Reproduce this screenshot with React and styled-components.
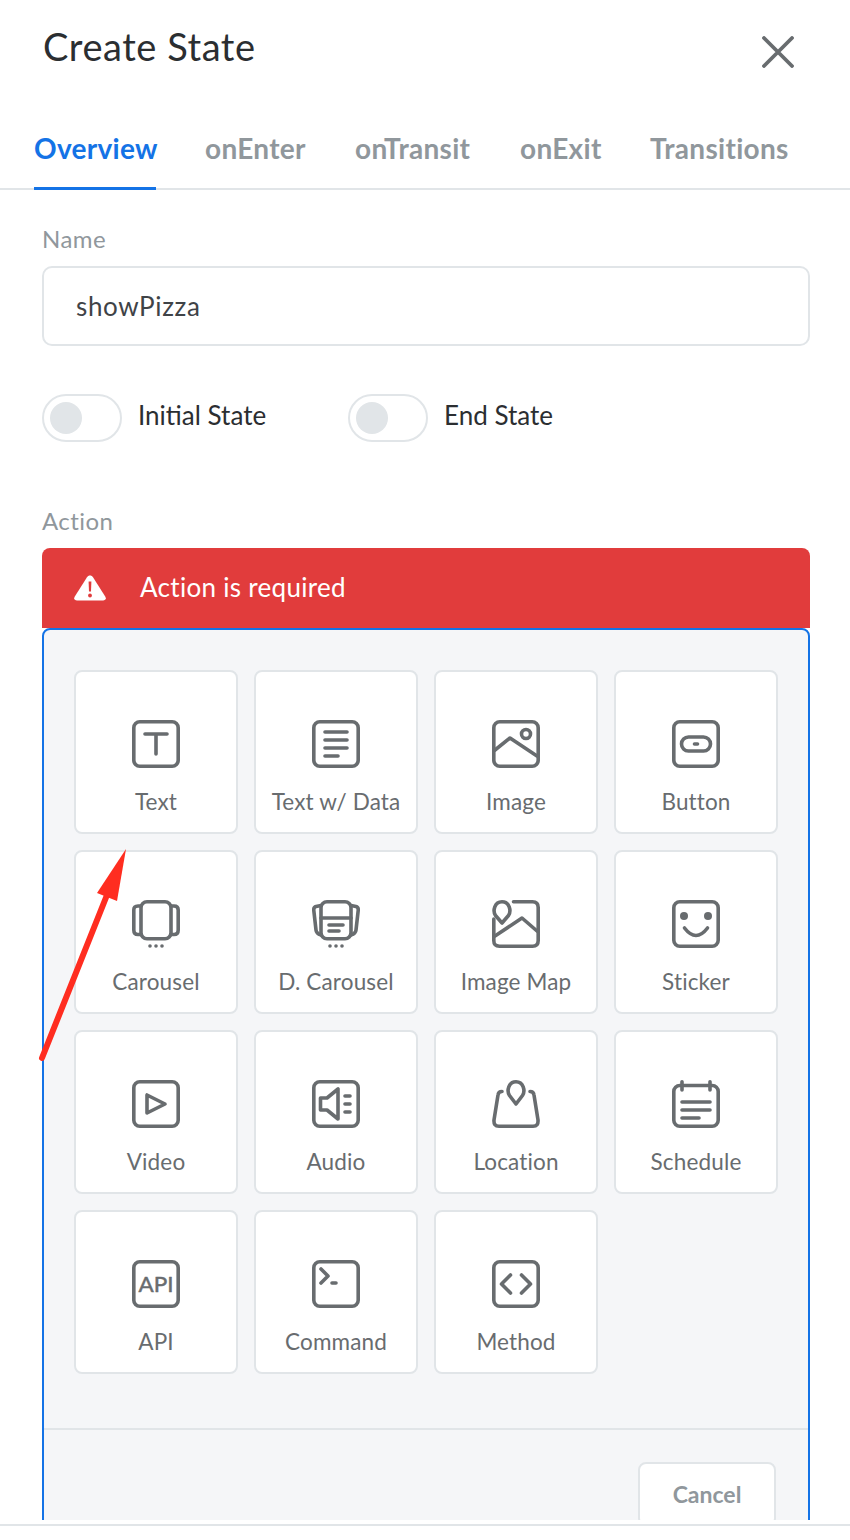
import React from "react";
import styled, { createGlobalStyle } from "styled-components";

const Global = createGlobalStyle`
  html, body { margin: 0; padding: 0; background: #fff; }
  * { box-sizing: border-box; }
  body { font-family: "Lato", "Noto Sans", sans-serif; }
`;

const Page = styled.div`
  position: relative;
  width: 850px;
  height: 1540px;
  overflow: hidden;
  background: #fff;
`;
const Sheet = styled.div`
  height: 1520px;
  overflow: hidden;
`;
const BottomRule = styled.div`
  height: 2px;
  margin-top: 4px;
  background: #e1e5e8;
`;
const Header = styled.header`
  height: 100px;
  padding: 22px 56px 0 43px;
  display: flex;
  justify-content: space-between;
  align-items: flex-start;
`;
const Title = styled.h1`
  margin: 0;
  font-size: 38px;
  line-height: 48px;
  letter-spacing: 0.55px;
  font-weight: 400;
  color: #2b2e31;
`;
const CloseIcon = styled.svg`
  width: 32px;
  height: 32px;
  margin-top: 14px;
  fill: none;
  stroke: #686c6f;
  stroke-width: 3.8;
  stroke-linecap: round;
`;
const Tabs = styled.nav`
  height: 90px;
  padding-left: 34px;
  display: flex;
  border-bottom: 2px solid #e1e5e8;
`;
const Tab = styled.div`
  width: ${(p) => p.$w}px;
  margin-right: ${(p) => p.$gap}px;
  height: 90px;
  padding-top: 30px;
  font-size: 28px;
  line-height: 36px;
  font-weight: 700;
  letter-spacing: 0.3px;
  white-space: nowrap;
  color: ${(p) => (p.$active ? "#1473e6" : "#90979c")};
  border-bottom: 3px solid ${(p) => (p.$active ? "#1473e6" : "transparent")};
`;
const Form = styled.div`
  padding: 0 40px 0 42px;
`;
const FieldLabel = styled.div`
  height: 30px;
  margin-top: ${(p) => p.$top}px;
  font-size: 24px;
  line-height: 28px;
  letter-spacing: 0.45px;
  color: #90979c;
`;
const NameInput = styled.div`
  height: 80px;
  margin-top: 11px;
  padding: 0 32px;
  display: flex;
  align-items: center;
  border: 2px solid #e1e5e8;
  border-radius: 10px;
  font-size: 26px;
  letter-spacing: 0.65px;
  color: #3f4347;
`;
const ToggleRow = styled.div`
  margin-top: 48px;
  display: flex;
`;
const ToggleGroup = styled.div`
  width: 306px;
  display: flex;
  align-items: center;
  gap: 16px;
`;
const Track = styled.div`
  width: 80px;
  height: 48px;
  padding-left: 6px;
  display: flex;
  align-items: center;
  border: 2px solid #e1e5e8;
  border-radius: 24px;
  background: #fff;
`;
const Knob = styled.div`
  width: 32px;
  height: 32px;
  border-radius: 50%;
  background: #e1e5e8;
`;
const ToggleLabel = styled.span`
  padding-bottom: 6px;
  font-size: 26px;
  color: #2b2e31;
`;
const Alert = styled.div`
  height: 80px;
  margin-top: 11px;
  padding-left: 32px;
  display: flex;
  align-items: center;
  gap: 34px;
  border-radius: 8px 8px 0 0;
  background: #e13c3c;
  color: #fff;
  font-size: 26px;
  letter-spacing: 0.3px;
  line-height: 28px;
`;
const AlertText = styled.span`
  padding-bottom: 2px;
`;
const AlertIcon = styled.svg`
  width: 32px;
  height: 26px;
  flex: none;
`;
const Panel = styled.section`
  height: 900px;
  border: 2px solid #1473e6;
  border-radius: 8px;
  background: #f5f6f8;
`;
const Grid = styled.div`
  padding: 40px 30px 54px;
  display: grid;
  grid-template-columns: repeat(4, 164px);
  grid-auto-rows: 164px;
  gap: 16px;
`;
const Card = styled.div`
  display: flex;
  flex-direction: column;
  align-items: center;
  padding-top: 48px;
  border: 2px solid #e1e5e8;
  border-radius: 8px;
  background: #fff;
`;
const CardLabel = styled.div`
  margin-top: 19px;
  font-size: 22.5px;
  line-height: 30px;
  letter-spacing: 0.15px;
  color: #686c6f;
  white-space: nowrap;
`;
const Icon = styled.svg`
  width: 48px;
  height: 48px;
  fill: none;
  stroke: #686c6f;
  stroke-width: 3.6;
  stroke-linecap: round;
  stroke-linejoin: round;
`;
const IconDot = styled.circle`
  fill: #686c6f;
  stroke: none;
`;
const IconText = styled.text`
  fill: #686c6f;
  stroke: #686c6f;
  stroke-width: 0.5;
  font-family: "Lato", sans-serif;
  font-size: 22px;
  font-weight: 400;
`;
const Footer = styled.div`
  padding: 32px 32px 0 0;
  display: flex;
  justify-content: flex-end;
  border-top: 2px solid #e1e5e8;
`;
const CancelButton = styled.div`
  width: 138px;
  height: 64px;
  display: flex;
  justify-content: center;
  align-items: center;
  border: 2px solid #e1e5e8;
  border-radius: 8px;
  background: #fff;
  font-size: 23px;
  font-weight: 700;
  color: #90979c;
`;
const ArrowOverlay = styled.svg`
  position: absolute;
  left: 0;
  top: 0;
  width: 850px;
  height: 1540px;
  pointer-events: none;
`;

const Box = () => <rect x="1.8" y="1.8" width="44.4" height="44.4" rx="6" />;

const icons = {
  text: (
    <>
      <Box />
      <path d="M13 14H35M24 14V34" />
    </>
  ),
  data: (
    <>
      <Box />
      <path d="M13 12H35M13 20H35M13 28H35M13 36H26" />
    </>
  ),
  image: (
    <>
      <Box />
      <circle cx="34" cy="14" r="4.5" />
      <path d="M3 30L18 18L45 36" />
    </>
  ),
  button: (
    <>
      <Box />
      <rect x="9.5" y="17" width="29" height="14" rx="7" />
      <path d="M22.5 24H25.5" />
    </>
  ),
  carousel: (
    <>
      <rect x="9" y="1.8" width="30" height="37" rx="6" />
      <path d="M9 6H6C3 6 1.8 7.5 1.8 10V30C1.8 33 3 34.5 6 34.5H9M39 6H42C45 6 46.2 7.5 46.2 10V30C46.2 33 45 34.5 42 34.5H39" />
      <IconDot cx="18" cy="46" r="1.8" />
      <IconDot cx="24" cy="46" r="1.8" />
      <IconDot cx="30" cy="46" r="1.8" />
    </>
  ),
  dcarousel: (
    <>
      <rect x="9" y="1.8" width="30" height="37" rx="6" />
      <path d="M9 5.5L4 6.5C2 7 1.6 8.5 1.8 10.5L4 30C4.3 33 5.5 34 9 35M39 5.5L44 6.5C46 7 46.4 8.5 46.2 10.5L44 30C43.7 33 42.5 34 39 35M9 18H39M17 25H31M17 31H27" />
      <IconDot cx="18" cy="46" r="1.8" />
      <IconDot cx="24" cy="46" r="1.8" />
      <IconDot cx="30" cy="46" r="1.8" />
    </>
  ),
  imagemap: (
    <>
      <path d="M21.5 1.8H40.5C44.5 1.8 46.2 3.5 46.2 7.5V40.5C46.2 44.5 44.5 46.2 40.5 46.2H7.5C3.5 46.2 1.8 44.5 1.8 40.5V19" />
      <path d="M10 23L3.5 15.5C0.5 11 2.5 1.8 10 1.8C17.5 1.8 19.5 11 16.5 15.5Z" />
      <path d="M3 36L30 18L45 31" />
    </>
  ),
  sticker: (
    <>
      <Box />
      <IconDot cx="12" cy="16" r="4" />
      <IconDot cx="36" cy="16" r="4" />
      <path d="M12.5 28Q24 43 35.5 28" />
    </>
  ),
  video: (
    <>
      <Box />
      <path d="M15 15V33L33 24Z" />
    </>
  ),
  audio: (
    <>
      <Box />
      <path d="M8.5 18H15L26 9V39L15 30H8.5ZM33 16H38M33 24H38M33 32H38" />
    </>
  ),
  location: (
    <>
      <path d="M10 11.5C7.5 11.5 6.2 13 6 15L2 40C1.7 44 3 46.2 7 46.2H41C45 46.2 46.3 44 46 40L42 15C41.8 13 40.5 11.5 38 11.5" />
      <path d="M24 24L17.5 15.5C14.5 11 16.5 1.8 24 1.8C31.5 1.8 33.5 11 30.5 15.5Z" />
    </>
  ),
  schedule: (
    <>
      <rect x="1.8" y="5.5" width="44.4" height="40.7" rx="6" />
      <path d="M10 1.8V10M38 1.8V10M10 22H38M10 30H38M10 38H27" />
    </>
  ),
  api: (
    <>
      <Box />
      <IconText x="24" y="31.5" textAnchor="middle" textLength="35" lengthAdjust="spacingAndGlyphs">
        API
      </IconText>
    </>
  ),
  command: (
    <>
      <Box />
      <path d="M9 9L16 16L9 23M20 23H24" />
    </>
  ),
  method: (
    <>
      <Box />
      <path d="M18.5 15L9.5 24L18.5 33M29.5 15L38.5 24L29.5 33" />
    </>
  ),
};

const actions = [
  ["text", "Text"],
  ["data", "Text w/ Data"],
  ["image", "Image"],
  ["button", "Button"],
  ["carousel", "Carousel"],
  ["dcarousel", "D. Carousel"],
  ["imagemap", "Image Map"],
  ["sticker", "Sticker"],
  ["video", "Video"],
  ["audio", "Audio"],
  ["location", "Location"],
  ["schedule", "Schedule"],
  ["api", "API"],
  ["command", "Command"],
  ["method", "Method"],
];

const tabs = [
  ["Overview", 122, 49, true],
  ["onEnter", 101, 49],
  ["onTransit", 117, 48],
  ["onExit", 81, 49],
  ["Transitions", 139, 0],
];

export default function App() {
  return (
    <Page>
      <Global />
      <Sheet>
        <Header>
          <Title>Create State</Title>
          <CloseIcon viewBox="0 0 32 32">
            <path d="M2 2L30 30M30 2L2 30" />
          </CloseIcon>
        </Header>
        <Tabs>
          {tabs.map(([label, w, gap, active]) => (
            <Tab key={label} $w={w} $gap={gap} $active={active}>
              {label}
            </Tab>
          ))}
        </Tabs>
        <Form>
          <FieldLabel $top={35}>Name</FieldLabel>
          <NameInput>showPizza</NameInput>
          <ToggleRow>
            <ToggleGroup>
              <Track>
                <Knob />
              </Track>
              <ToggleLabel>Initial State</ToggleLabel>
            </ToggleGroup>
            <ToggleGroup>
              <Track>
                <Knob />
              </Track>
              <ToggleLabel>End State</ToggleLabel>
            </ToggleGroup>
          </ToggleRow>
          <FieldLabel $top={65}>Action</FieldLabel>
          <Alert>
            <AlertIcon viewBox="0 0 32 26">
              <path
                d="M13 2.2C14.4 0 17.6 0 19 2.2L31.2 21.5C32.6 23.8 31.4 25.5 29 25.5H3C0.6 25.5 -0.6 23.8 0.8 21.5Z"
                fill="#fff"
              />
              <path d="M14.6 6.5H17.4L17 16.5H15Z" fill="#e13c3c" />
              <circle cx="16" cy="20.5" r="1.9" fill="#e13c3c" />
            </AlertIcon>
            <AlertText>Action is required</AlertText>
          </Alert>
          <Panel>
            <Grid>
              {actions.map(([key, label]) => (
                <Card key={key}>
                  <Icon viewBox="0 0 48 48">{icons[key]}</Icon>
                  <CardLabel>{label}</CardLabel>
                </Card>
              ))}
            </Grid>
            <Footer>
              <CancelButton>Cancel</CancelButton>
            </Footer>
          </Panel>
        </Form>
      </Sheet>
      <BottomRule />
      <ArrowOverlay viewBox="0 0 850 1540">
        <path d="M42 1058L107 895" stroke="#ff2d20" strokeWidth="6" strokeLinecap="round" fill="none" />
        <path d="M126 849L97 893L117 901Z" fill="#ff2d20" />
      </ArrowOverlay>
    </Page>
  );
}
